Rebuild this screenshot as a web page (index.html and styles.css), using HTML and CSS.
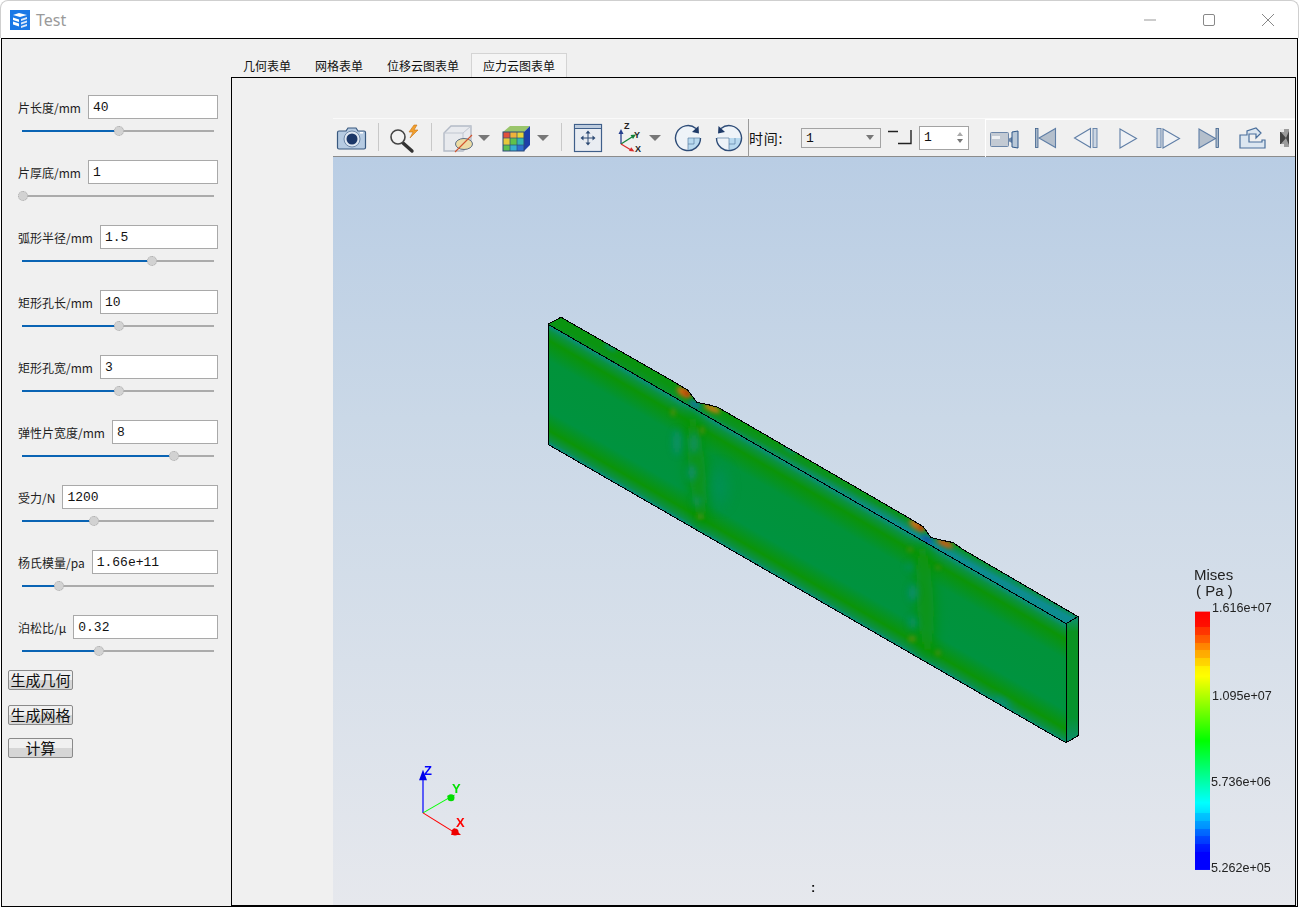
FILE: index.html
```html
<!DOCTYPE html>
<html lang="zh">
<head>
<meta charset="utf-8">
<title>Test</title>
<link rel="stylesheet" href="styles.css">
</head>
<body>
<div class="window">
  <header class="titlebar">
    <svg class="app-icon" viewBox="0 0 20 20"><rect width="20" height="20" fill="#1a78e6"/><path d="M3 5l6-2 8 2-7 2z M3 7.500l6 2v2.500l-6-2z M3 11.500l6 2v3l-6-2z" fill="#fff"/><path d="M11 9l6-2v2l-6 2z M11 12.500l6-2v2l-6 2z M11 16l6-2v2l-6 2z" fill="#dbe9fb"/></svg>
    <span class="app-title">Test</span>
    <div class="win-controls">
      <svg class="win-btn" viewBox="0 0 12 12"><path d="M0 6h12" stroke="#999" fill="none"/></svg>
      <svg class="win-btn" viewBox="0 0 12 12"><rect x=".5" y=".5" width="11" height="11" rx="1.500" stroke="#888" fill="none"/></svg>
      <svg class="win-btn" viewBox="0 0 12 12"><path d="M0 0l12 12M12 0L0 12" stroke="#888" fill="none"/></svg>
    </div>
  </header>
  <main class="client">
    <aside class="sidebar">
      <div class="field"><div class="field-row"><label class="field-label">片长度/mm</label><div class="field-input">40</div></div><div class="slider"><div class="slider-fill" style="width:97px"><i class="slider-handle"></i></div></div></div>
      <div class="field"><div class="field-row"><label class="field-label">片厚底/mm</label><div class="field-input">1</div></div><div class="slider"><div class="slider-fill" style="width:1px"><i class="slider-handle"></i></div></div></div>
      <div class="field"><div class="field-row"><label class="field-label">弧形半径/mm</label><div class="field-input">1.5</div></div><div class="slider"><div class="slider-fill" style="width:130px"><i class="slider-handle"></i></div></div></div>
      <div class="field"><div class="field-row"><label class="field-label">矩形孔长/mm</label><div class="field-input">10</div></div><div class="slider"><div class="slider-fill" style="width:97px"><i class="slider-handle"></i></div></div></div>
      <div class="field"><div class="field-row"><label class="field-label">矩形孔宽/mm</label><div class="field-input">3</div></div><div class="slider"><div class="slider-fill" style="width:97px"><i class="slider-handle"></i></div></div></div>
      <div class="field"><div class="field-row"><label class="field-label">弹性片宽度/mm</label><div class="field-input">8</div></div><div class="slider"><div class="slider-fill" style="width:152px"><i class="slider-handle"></i></div></div></div>
      <div class="field"><div class="field-row"><label class="field-label">受力/N</label><div class="field-input">1200</div></div><div class="slider"><div class="slider-fill" style="width:72px"><i class="slider-handle"></i></div></div></div>
      <div class="field"><div class="field-row"><label class="field-label">杨氏模量/pa</label><div class="field-input">1.66e+11</div></div><div class="slider"><div class="slider-fill" style="width:37px"><i class="slider-handle"></i></div></div></div>
      <div class="field field-last"><div class="field-row"><label class="field-label">泊松比/μ</label><div class="field-input">0.32</div></div><div class="slider"><div class="slider-fill" style="width:77px"><i class="slider-handle"></i></div></div></div>
      <button class="btn">生成几何</button>
      <button class="btn">生成网格</button>
      <button class="btn btn-calc">计算</button>
    </aside>
    <section class="content">
      <nav class="tabs">
        <span class="tab">几何表单</span>
        <span class="tab">网格表单</span>
        <span class="tab">位移云图表单</span>
        <span class="tab tab-active">应力云图表单</span>
      </nav>
      <div class="pane">
        <div class="toolbar">
          <!-- each cell's viewBox uses page coordinates -->
          <svg class="tool" width="38" viewBox="333 119 38 38"><path d="M339 131h7l2-3h8l2 3h6a1.500 1.500 0 0 1 1.500 1.500v15a1.500 1.500 0 0 1-1.500 1.500h-25a1.500 1.500 0 0 1-1.500-1.500v-15a1.500 1.500 0 0 1 1.500-1.500z" fill="#b6cbe2" stroke="#38587f" stroke-width="1.200"/><circle cx="352" cy="139" r="8" fill="#dfe8f2" stroke="#6f88a8"/><circle cx="352" cy="139" r="5.500" fill="#1b3768"/><rect x="360" y="132" width="3" height="1.500" fill="#fff"/></svg>
          <div class="tool-sep"></div>
          <svg class="tool" width="40" viewBox="385 119 40 38"><path d="M403 143l9 8" stroke="#333" stroke-width="3.400" stroke-linecap="round"/><circle cx="398" cy="137" r="7" fill="#f2f2f2" stroke="#444" stroke-width="1.600"/><path d="M414 125l-5 7h4l-3 6 8-8h-4l3-5z" fill="#f2a02c" stroke="#c8741a" stroke-width=".6"/></svg>
          <div class="tool-sep tool-sep-b"></div>
          <svg class="tool" width="41" viewBox="437 119 41 38"><path d="M444 133l7-7h20v17l-8 8h-19z" fill="#e8eaee" stroke="#b3bac6" stroke-width="1.400"/><path d="M444 133h19v18M463 133l8-7" fill="none" stroke="#c0c6d0"/><ellipse cx="464" cy="144" rx="8.500" ry="5.500" fill="#ecdca4" stroke="#5f7086"/><path d="M455 152l17-17" stroke="#d3532c" stroke-width="1.100"/></svg>
          <div class="tool-arrow"></div>
          <svg class="tool" width="47" viewBox="490 119 47 38"><path d="M503 132l7-6h20l-6 6z" fill="#9ac56b"/><path d="M524 132l6-6v19l-6 6z" fill="#1d3fa8"/><rect x="503" y="132" width="21" height="19" fill="#5ab0d6"/><rect x="503" y="132" width="7" height="6" fill="#e2503a"/><rect x="510" y="132" width="7" height="6" fill="#f0b23a"/><rect x="517" y="132" width="7" height="6" fill="#e8d53a"/><rect x="503" y="138" width="7" height="7" fill="#e8c83a"/><rect x="510" y="138" width="7" height="7" fill="#5fc24a"/><rect x="517" y="138" width="7" height="7" fill="#35b5b0"/><rect x="503" y="145" width="7" height="6" fill="#5cc050"/><rect x="510" y="145" width="7" height="6" fill="#36b0d0"/><rect x="517" y="145" width="7" height="6" fill="#2f6fd0"/><path d="M503 138h21M503 145h21M510 132v19M517 132v19" stroke="#28507c" stroke-width=".7"/><rect x="503" y="132" width="21" height="19" fill="none" stroke="#2a4a78"/></svg>
          <div class="tool-arrow"></div>
          <div class="tool-sep tool-sep-c"></div>
          <svg class="tool" width="40" viewBox="568 119 40 38"><rect x="574.500" y="124.500" width="27" height="27" fill="#e9edf2" stroke="#3f5f8a" stroke-width="1.200"/><rect x="575" y="125" width="26" height="3" fill="#bccbdd"/><path d="M575 128.500h26" stroke="#3f5f8a"/><path d="M588 132v12M582 138h12" stroke="#2c4a74"/><path d="M588 130.500l-2.500 3h5zM588 145.500l-2.500-3h5zM580.500 138l3-2.500v5zM595.500 138l-3-2.500v5z" fill="#2c4a74"/></svg>
          <svg class="tool" width="40" viewBox="608 119 40 38"><path d="M621 144v-11" stroke="#27408f" stroke-width="1.300"/><path d="M621 129l-2.500 5h5z" fill="#27408f"/><path d="M621 144l11-7" stroke="#13813a" stroke-width="1.300"/><path d="M636 134.500l-5.500.5 2.500 4z" fill="#13813a"/><path d="M621 144l10 6" stroke="#d92b2b" stroke-width="1.300"/><path d="M634.500 151.500l-5.500-.5 2.200-3.800z" fill="#d92b2b"/><text class="axis-mini" x="624" y="129">Z</text><text class="axis-mini" x="634" y="138">Y</text><text class="axis-mini" x="635" y="152">X</text></svg>
          <div class="tool-arrow tool-arrow-axes"></div>
          <svg class="tool" width="40" viewBox="668 119 40 38"><circle cx="688" cy="138" r="12.500" fill="#eef3f8"/><path d="M688 138h12.500a12.500 12.500 0 0 1-12.500 12.500z" fill="#b8d9ef"/><path d="M694 138v6h-6M688 138v12M688 138h12" fill="none" stroke="#5a7ea5" stroke-width=".7"/><path d="M696 128.500a12.500 12.500 0 1 0 4.500 9.500" fill="none" stroke="#2f4d78" stroke-width="1.400"/><path d="M698.500 126l.5 7.500-7-1.500z" fill="#1e3a68"/></svg>
          <svg class="tool" width="40" viewBox="708 119 40 38"><circle cx="729" cy="138" r="12.500" fill="#eef3f8"/><path d="M729 138h12.500a12.500 12.500 0 0 1-12.500 12.500z" fill="#b8d9ef"/><path d="M729 138h-12M735 138v6h-6M729 138v12" fill="none" stroke="#5a7ea5" stroke-width=".7"/><path d="M721 128.500a12.500 12.500 0 1 1-4.500 9.500" fill="none" stroke="#2f4d78" stroke-width="1.400"/><path d="M718.500 126l-.5 7.500 7-1.500z" fill="#1e3a68"/></svg>
          <div class="time-group">
            <span class="time-label">时间:</span>
            <div class="combo">1<i class="combo-arrow"></i></div>
            <svg class="step-icon" width="24" height="16" viewBox="0 0 24 16"><path d="M0 1.500h8M8 1.500h2M23 0v13.500H10" fill="none" stroke="#222" stroke-width="1.400"/></svg>
            <div class="spin">1<span class="spin-arrows"><i class="spin-up"></i><i class="spin-down"></i></span></div>
          </div>
          <div class="player">
            <svg class="tool" width="39" viewBox="985 119 39 38"><rect x="990.500" y="132.500" width="18" height="14" rx="1" fill="#c3cad3" stroke="#6c86a8"/><rect x="992" y="136" width="8" height="3" fill="#eef0f3"/><path d="M1008 139l4-2v6l-4-2z" fill="#6c86a8"/><path d="M1012 132l6-1v17l-6-1z" fill="#b9c8d8" stroke="#2f5788"/></svg>
            <svg class="tool" width="41" viewBox="1024 119 41 38"><rect x="1035.500" y="128.500" width="2.500" height="19" fill="#a8b8ca" stroke="#3f618c" stroke-width=".8"/><path d="M1039 138l16.500-9.500v19z" fill="#b4bfcc" stroke="#5f7ea6" stroke-width="1.100"/></svg>
            <svg class="tool" width="41" viewBox="1065 119 41 38"><path d="M1074.500 138l16-9.500v19z" fill="#f0f2f5" stroke="#5f7ea6" stroke-width="1.100"/><rect x="1093" y="128.500" width="4" height="19" fill="#ccd6e2" stroke="#5f7ea6" stroke-width=".9"/></svg>
            <svg class="tool" width="41" viewBox="1106 119 41 38"><path d="M1120 129l16.500 9.500-16.500 9.500z" fill="#f0f2f5" stroke="#5f7ea6" stroke-width="1.100"/></svg>
            <svg class="tool" width="41" viewBox="1147 119 41 38"><rect x="1157" y="128.500" width="4" height="19" fill="#ccd6e2" stroke="#5f7ea6" stroke-width=".9"/><path d="M1163 129l16.500 9.500-16.500 9.500z" fill="#f0f2f5" stroke="#5f7ea6" stroke-width="1.100"/></svg>
            <svg class="tool" width="41" viewBox="1188 119 41 38"><path d="M1199 129l16.500 9.500-16.500 9.500z" fill="#b4bfcc" stroke="#5f7ea6" stroke-width="1.100"/><rect x="1216" y="128.500" width="2.500" height="19" fill="#a8b8ca" stroke="#3f618c" stroke-width=".8"/></svg>
            <svg class="tool" width="41" viewBox="1229 119 41 38"><path d="M1240 148v-13h7v-4l9-3v0l5 5-5 5v-4h-7v8h13v-2h3v8z" fill="#dce6f0" stroke="#4a6f9c" stroke-width="1.200"/></svg>
            <svg class="tool" width="25" viewBox="1270 119 25 38"><rect x="1280" y="129" width="9" height="18" fill="#9c9c9c"/><path d="M1280 131l6 7-6 7zM1289 131l-3 7 3 7z" fill="#444"/><path d="M1280 129h4v3h-4zM1280 144h4v3h-4z" fill="#e8e8e8"/></svg>
          </div>
        </div>
        <div class="viewport">
          <svg class="scene" viewBox="333 158 962 747" preserveAspectRatio="none">
            <defs>
              <linearGradient id="faceGrad" gradientUnits="userSpaceOnUse" x1="800" y1="470.500" x2="748" y2="560.600">
                <stop offset="0" stop-color="#0c8f80"/>
                <stop offset=".05" stop-color="#0a9240"/>
                <stop offset=".13" stop-color="#0b9408"/>
                <stop offset=".3" stop-color="#01933a"/>
                <stop offset=".72" stop-color="#00933f"/>
                <stop offset=".88" stop-color="#0b9408"/>
                <stop offset=".96" stop-color="#0b9048"/>
                <stop offset="1" stop-color="#0c8d88"/>
              </linearGradient>
              <linearGradient id="topGrad" gradientUnits="userSpaceOnUse" x1="800" y1="456" x2="793" y2="469">
                <stop offset="0" stop-color="#0a9410"/>
                <stop offset=".4" stop-color="#0b9225"/>
                <stop offset="1" stop-color="#0d8c90"/>
              </linearGradient>
              <linearGradient id="endGrad" x1="0" y1="0" x2="0" y2="1">
                <stop offset="0" stop-color="#0d8f78"/>
                <stop offset=".12" stop-color="#0a9320"/>
                <stop offset=".8" stop-color="#05932f"/>
                <stop offset="1" stop-color="#0d8f70"/>
              </linearGradient>
              <linearGradient id="legendGrad" x1="0" y1="0" x2="0" y2="1">
                <stop offset="0" stop-color="#ff0000"/><stop offset=".06" stop-color="#ff1000"/>
                <stop offset=".06" stop-color="#ff3000"/><stop offset=".09" stop-color="#ff3800"/>
                <stop offset=".09" stop-color="#ff5500"/><stop offset=".12" stop-color="#ff6000"/>
                <stop offset=".12" stop-color="#ff8000"/><stop offset=".15" stop-color="#ff8c00"/>
                <stop offset=".15" stop-color="#ffa800"/><stop offset=".18" stop-color="#ffb000"/>
                <stop offset=".18" stop-color="#ffcc00"/><stop offset=".21" stop-color="#ffd800"/>
                <stop offset=".21" stop-color="#ffee00"/><stop offset=".25" stop-color="#ffff00"/>
                <stop offset=".5" stop-color="#00ff00"/>
                <stop offset=".74" stop-color="#00ffff"/>
                <stop offset=".78" stop-color="#00e0ff"/><stop offset=".78" stop-color="#00c8ff"/>
                <stop offset=".81" stop-color="#00b8ff"/><stop offset=".81" stop-color="#00a0ff"/>
                <stop offset=".84" stop-color="#0090ff"/><stop offset=".84" stop-color="#0070ff"/>
                <stop offset=".87" stop-color="#0060ff"/><stop offset=".87" stop-color="#0048ff"/>
                <stop offset=".9" stop-color="#0038ff"/><stop offset=".9" stop-color="#0020ff"/>
                <stop offset=".93" stop-color="#0010ff"/><stop offset=".93" stop-color="#0000ff"/>
                <stop offset="1" stop-color="#0000ff"/>
              </linearGradient>
              <filter id="blur3" x="-150%" y="-150%" width="400%" height="400%"><feGaussianBlur stdDeviation="3.500"/></filter>
              <filter id="blur2" x="-150%" y="-150%" width="400%" height="400%"><feGaussianBlur stdDeviation="2"/></filter>
              <filter id="blur6" x="-150%" y="-150%" width="400%" height="400%"><feGaussianBlur stdDeviation="7"/></filter>
              <clipPath id="frontClip"><path d="M548 325L1066 624V743L548 445z"/></clipPath>
              <clipPath id="topClip"><path d="M548 325L561 318L673 382L688 391L697 403L707 405L718 408L730 415L908 518L923 527L931 538L943 541L953 543L963 550L1078 617L1066 624z"/></clipPath>
            </defs>

            <path d="M548 325L561 318L673 382L688 391L697 403L707 405L718 408L730 415L908 518L923 527L931 538L943 541L953 543L963 550L1078 617L1066 624z" fill="url(#topGrad)"/>
            <g clip-path="url(#topClip)">
              <ellipse cx="684" cy="393" rx="8" ry="4" transform="rotate(32 684 393)" fill="#d06a10" filter="url(#blur2)"/>
              <ellipse cx="687" cy="394" rx="3" ry="1.800" transform="rotate(32 687 394)" fill="#b02208" filter="url(#blur2)"/>
              <ellipse cx="712" cy="409" rx="9" ry="3" transform="rotate(25 712 409)" fill="#d07a10" filter="url(#blur2)"/>
              <ellipse cx="695" cy="405" rx="7" ry="3" transform="rotate(30 695 405)" fill="#0a78a0" filter="url(#blur2)"/>
              <ellipse cx="917" cy="526" rx="9" ry="4" transform="rotate(32 917 526)" fill="#c87018" filter="url(#blur2)"/>
              <ellipse cx="921" cy="528" rx="3" ry="2" transform="rotate(32 921 528)" fill="#b02a08" filter="url(#blur2)"/>
              <ellipse cx="945" cy="544" rx="9" ry="3" transform="rotate(25 945 544)" fill="#d05a10" filter="url(#blur2)"/>
              <ellipse cx="927" cy="540" rx="6" ry="2.500" transform="rotate(30 927 540)" fill="#1850b0" filter="url(#blur2)"/>
              <ellipse cx="610" cy="348" rx="7" ry="2" transform="rotate(30 610 348)" fill="#0d8d80" filter="url(#blur2)"/>
              <ellipse cx="790" cy="450" rx="8" ry="2" transform="rotate(30 790 450)" fill="#0d8d80" filter="url(#blur2)"/>
              <ellipse cx="1010" cy="578" rx="8" ry="2" transform="rotate(30 1010 578)" fill="#0d8d80" filter="url(#blur2)"/>
            </g>

            <path d="M548 325L1066 624V743L548 445z" fill="url(#faceGrad)"/>
            <g clip-path="url(#frontClip)">
              <ellipse cx="697" cy="470" rx="8" ry="62" transform="rotate(-5 697 470)" fill="#0b9408" filter="url(#blur6)"/>
              <ellipse cx="925" cy="600" rx="8" ry="62" transform="rotate(-3 925 600)" fill="#0b9408" filter="url(#blur6)"/>
              <g opacity=".75">
                <ellipse cx="677" cy="443" rx="4" ry="13" fill="#0c8f80" filter="url(#blur3)"/>
                <ellipse cx="694" cy="444" rx="4" ry="11" fill="#0c8f80" filter="url(#blur3)"/>
                <ellipse cx="692" cy="473" rx="4" ry="8" fill="#0c8c90" filter="url(#blur3)"/>
                <ellipse cx="697" cy="502" rx="4" ry="5" fill="#0c8f80" filter="url(#blur3)"/>
                <ellipse cx="913" cy="593" rx="4" ry="9" fill="#0c8c90" filter="url(#blur3)"/>
                <ellipse cx="913" cy="623" rx="4" ry="6" fill="#0c8f80" filter="url(#blur3)"/>
                <ellipse cx="910" cy="567" rx="3" ry="4" fill="#0c8f80" filter="url(#blur3)"/>
              </g>
              <ellipse cx="719" cy="487" rx="8" ry="20" fill="#02906a" filter="url(#blur6)" opacity=".6"/>
              <g opacity=".55">
                <ellipse cx="673" cy="413" rx="2.500" ry="4" fill="#7a8c10" filter="url(#blur2)"/>
                <ellipse cx="702" cy="431" rx="2.500" ry="4" fill="#7a8c10" filter="url(#blur2)"/>
                <ellipse cx="700" cy="517" rx="4" ry="2" fill="#7a8c10" filter="url(#blur2)"/>
                <ellipse cx="910" cy="550" rx="3" ry="2" fill="#7a8c10" filter="url(#blur2)"/>
                <ellipse cx="938" cy="568" rx="3" ry="2" fill="#6a8c10" filter="url(#blur2)"/>
                <ellipse cx="912" cy="639" rx="4" ry="3" fill="#8a8c10" filter="url(#blur2)"/>
                <ellipse cx="938" cy="653" rx="3" ry="3" fill="#6a8c10" filter="url(#blur2)"/>
              </g>
              <ellipse cx="1002" cy="702" rx="10" ry="3" transform="rotate(30 1002 702)" fill="#0c8f80" filter="url(#blur3)"/>
            </g>
            <path d="M1066 624L1078 617V736L1066 743z" fill="url(#endGrad)"/>

            <g class="edges">
              <path d="M548 325L561 318L673 382L688 391L697 403L707 405L718 408L730 415L908 518L923 527L931 538L943 541L953 543L963 550L1078 617V736L1066 743L548 445V325L1066 624L1078 617M1066 624V743"/>
            </g>

            <path d="M423 813V778" stroke="#0000ff" stroke-width="1.200"/>
            <path d="M423 770l-4 10.500h8z" fill="#0000e8"/>
            <path d="M423 813L449 798" stroke="#00ff00" stroke-width="1"/>
            <circle cx="451" cy="798" r="3.500" fill="#00dd00"/><path d="M455 795l-8 1 3 5z" fill="#00dd00"/>
            <path d="M423 813L452 831" stroke="#ff0000" stroke-width="1"/>
            <circle cx="455" cy="832" r="3.500" fill="#ee0000"/><path d="M461 835h-10l3-7z" fill="#ee0000"/>
            <text class="axis-z" x="424" y="775">Z</text>
            <text class="axis-y" x="452" y="793">Y</text>
            <text class="axis-x" x="456" y="827">X</text>

            <rect x="1195" y="612" width="15" height="258" fill="url(#legendGrad)"/>
            <text class="legend-title" x="1194" y="580">Mises</text>
            <text class="legend-title" x="1196" y="596">( Pa )</text>
            <text class="legend-value" x="1212" y="612">1.616e+07</text>
            <text class="legend-value" x="1212" y="700">1.095e+07</text>
            <text class="legend-value" x="1211" y="786">5.736e+06</text>
            <text class="legend-value" x="1211" y="872">5.262e+05</text>
            <text class="colon" x="811" y="892">:</text>
          </svg>
        </div>
      </div>
    </section>
  </main>
</div>
</body>
</html>
```

FILE: styles.css
```css
* { box-sizing: border-box; }
html, body { margin: 0; height: 100%; background: #fff; overflow: hidden; }

.window {
  width: 1299px;
  height: 909px;
  display: flex;
  flex-direction: column;
  background: #fff;
  font-family: "Noto Sans CJK SC", "Liberation Sans", sans-serif;
}

.titlebar {
  height: 38px;
  flex: none;
  display: flex;
  align-items: center;
  padding-left: 10px;
  border: 1px solid #cfcfcf;
  border-bottom: 0;
  border-radius: 8px 8px 0 0;
}
.app-icon { width: 20px; height: 20px; margin-left: -1px; }
.app-title { margin-left: 6px; font: 16px "Noto Sans", sans-serif; color: #9a9a9a; }
.win-controls { margin-left: auto; display: flex; gap: 47px; padding-right: 24px; }
.win-btn { width: 12px; height: 12px; overflow: visible; display: block; }

.client {
  flex: none;
  height: 869px;
  margin-left: 1px;
  width: 1297px;
  display: flex;
  background: #f0f0f0;
  border: 1px solid #000;
}

.sidebar {
  width: 228px;
  flex: none;
  padding: 56px 12px 0 6px;
  display: flex;
  flex-direction: column;
  align-items: flex-start;
}
.field { width: 100%; height: 65px; }
.field-last { height: 55px; }
.field-row { display: flex; align-items: center; height: 24px; padding-left: 10px; gap: 7px; }
.field-label { font-size: 12px; color: #222; white-space: nowrap; }
.field-input {
  flex: 1;
  height: 24px;
  background: #fff;
  border: 1px solid #a9a9a9;
  padding-left: 4px;
  font: 13px/24px "Liberation Mono", monospace;
  color: #111;
}
.slider { position: relative; height: 2px; margin: 11px 4px 0 14px; background: #ababab; }
.slider-fill { position: relative; height: 2px; background: #0a64b4; }
.slider-handle {
  position: absolute;
  right: -5px;
  top: -4px;
  width: 10px;
  height: 10px;
  border-radius: 50%;
  background: #d2d2d2;
  border: 1px dotted #aaa;
}

.btn {
  width: 65px;
  height: 20px;
  margin-bottom: 15px;
  padding: 0;
  font: 15px/18px "Noto Sans CJK SC", sans-serif;
  color: #111;
  border: 1px solid #8a8a8a;
  border-radius: 2px;
  background: linear-gradient(#f0f0f0 0 50%, #d6d6d6 50% 100%);
}
.btn-calc { margin-top: -2px; }

.content { flex: 1; min-width: 0; display: flex; flex-direction: column; padding: 14px 1px 0 0; }

.tabs { display: flex; height: 24px; flex: none; padding-left: 1px; }
.tab { padding: 0 12px; font-size: 12px; line-height: 26px; color: #111; }
.tab-active { background: #f5f5f5; border: 1px solid #d4d4d4; border-bottom: 0; line-height: 24px; padding: 0 11px; }

.pane {
  flex: 1;
  min-height: 0;
  margin-left: 1px;
  border: 1px solid #000;
  padding: 41px 0 0 101px;
  display: flex;
  flex-direction: column;
}

.toolbar {
  height: 39px;
  flex: none;
  display: flex;
  align-items: flex-start;
  background: #f0f0f0;
  border-bottom: 1px solid #8c8c8c;
  border-top: 1px solid #fafafa;
  margin-top: -1px;
}
.tool { height: 38px; flex: none; display: block; }
.tool-sep { width: 14px; height: 28px; flex: none; margin-top: 4px; position: relative; }
.tool-sep::after { content: ""; position: absolute; left: 7px; top: 0; bottom: 0; width: 1px; background: #c8c8c8; }
.tool-sep-b { width: 12px; }
.tool-sep-b::after { left: 6px; }
.tool-sep-c { width: 19px; }
.tool-sep-c::after { left: 12px; }
.tool-arrow { width: 12px; height: 38px; flex: none; position: relative; }
.tool-arrow::after {
  content: "";
  position: absolute;
  left: 0;
  top: 16px;
  border-left: 6px solid transparent;
  border-right: 6px solid transparent;
  border-top: 6px solid #777;
}
.tool-arrow-axes { width: 20px; }
.tool-arrow-axes::after { left: 1px; }

.time-group {
  flex: none;
  width: 237px;
  height: 38px;
  display: flex;
  align-items: center;
  border-left: 1px solid #9a9a9a;
}
.time-label { font-size: 14px; color: #111; width: 52px; letter-spacing: .8px; }
.combo {
  width: 80px;
  height: 20px;
  border: 1px solid #a3a3a3;
  font: 13px/19px "Liberation Mono", monospace;
  padding-left: 4px;
  color: #111;
  position: relative;
}
.combo-arrow {
  position: absolute;
  right: 6px;
  top: 6px;
  border-left: 4px solid transparent;
  border-right: 4px solid transparent;
  border-top: 5px solid #777;
}
.step-icon { margin: 0 7px; flex: none; }
.spin {
  width: 50px;
  height: 24px;
  background: #fff;
  border: 1px solid #a3a3a3;
  font: 13px/22px "Liberation Mono", monospace;
  padding-left: 4px;
  color: #111;
  position: relative;
}
.spin-arrows { position: absolute; right: 5px; top: 5px; display: flex; flex-direction: column; gap: 3px; }
.spin-up { border-left: 3px solid transparent; border-right: 3px solid transparent; border-bottom: 4px solid #aaa; }
.spin-down { border-left: 3px solid transparent; border-right: 3px solid transparent; border-top: 4px solid #777; }

.player {
  flex: none;
  width: 310px;
  height: 38px;
  display: flex;
  box-shadow: inset 1px 1px 0 #fff;
}

.viewport {
  flex: 1;
  min-height: 0;
  position: relative;
  background: linear-gradient(#b9cde4 0%, #cad8e7 35%, #e6e8ed 100%);
}
.scene { position: absolute; inset: 0; width: 100%; height: 100%; display: block; }
.edges path { fill: none; stroke: #000; stroke-width: 1; shape-rendering: crispEdges; }

.axis-mini { font: bold 9px "Liberation Sans", sans-serif; fill: #222; }
.axis-z, .axis-y, .axis-x { font: bold 13px "Liberation Sans", sans-serif; }
.axis-z { fill: #0000ff; }
.axis-y { fill: #00e000; }
.axis-x { fill: #ff0000; }
.legend-title { font: 15px "Liberation Sans", sans-serif; fill: #222; }
.legend-value { font: 12.600px "Liberation Sans", sans-serif; fill: #222; }
.colon { font: bold 13px "Liberation Sans", sans-serif; fill: #111; }
```
